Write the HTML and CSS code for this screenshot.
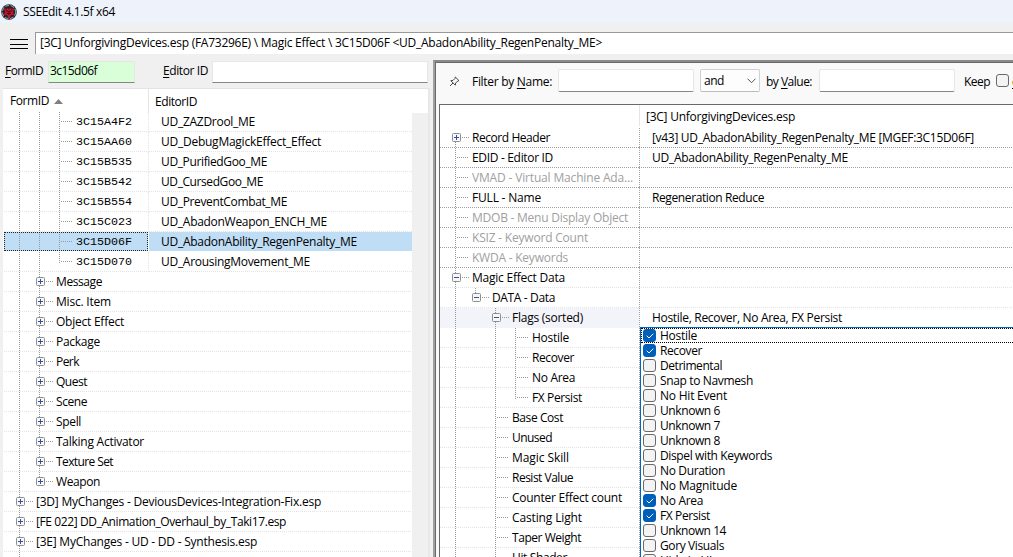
FILE: index.html
```html
<!DOCTYPE html>
<html lang="en">
<head>
<meta charset="utf-8">
<title>SSEEdit 4.1.5f x64</title>
<link rel="stylesheet" href="styles.css">
</head>
<body>
<div class="window">
  <header class="titlebar">
    <svg class="logo" width="16" height="16" viewBox="0 0 16 16">
      <circle cx="8" cy="8" r="7.8" fill="#20262a"/>
      <circle cx="8" cy="8" r="6.7" fill="none" stroke="#8b9494" stroke-width="1.2" stroke-dasharray="4 1.5"/>
      <path d="M3 4l3 2 2-3 2 3 3-2-1 4 1 3-3 0-2 4-2-4-3 0 1-3z" fill="#c8102c"/>
      <path d="M5 7h6M6 9.5h4M8 3v10" stroke="#4a0712" stroke-width="1"/>
      <path d="M6 4.5l1.5 2M10 4.5l-1.5 2M8 11v3" stroke="#f02848" stroke-width="1"/>
    </svg>
    <span data-w="92">SSEEdit 4.1.5f x64</span>
  </header>
  <div class="pathbar">
    <div class="burger"><i></i><i></i><i></i></div>
    <div class="path"><span data-w="562">[3C] UnforgivingDevices.esp (FA73296E) \ Magic Effect \ 3C15D06F &lt;UD_AbadonAbility_RegenPenalty_ME&gt;</span></div>
  </div>
  <main class="panes">
    <section class="left">
      <div class="search">
        <label class="lbl-form" data-w="38"><u>F</u>ormID</label>
        <div class="field found"><span data-w="47">3c15d06f</span></div>
        <label class="lbl-editor" data-w="45"><u>E</u>ditor ID</label>
        <div class="field wide"></div>
      </div>
      <div class="nav">
        <div class="navmain">
          <div class="navhead">
            <div class="h1"><span data-w="39">FormID</span><svg width="9" height="5" viewBox="0 0 9 5"><path d="M0 5L4.5 0L9 5z" fill="#808080"/></svg></div>
            <div class="h2"><span data-w="42">EditorID</span></div>
          </div>
          <div id="nav"></div>
        </div>
        <div class="scroll"></div>
      </div>
    </section>
    <section class="right">
      <div class="filter">
        <svg class="pin" width="11" height="11" viewBox="0 0 11 11" fill="none" stroke="#44474f" stroke-width="1"><path d="M6.3 1L10 4.7L8.7 5L6.6 7.1L6.3 9.2L1.8 4.7L4 4.4L6.1 2.3zM4 7L1 10"/></svg>
        <span class="f-name" data-w="80">Filter by <u>N</u>ame:</span>
        <div class="input i-name"></div>
        <div class="combo"><span data-w="20">and</span><svg width="9" height="6" viewBox="0 0 9 6" fill="none" stroke="#555"><path d="M.5 .7L4.5 4.7L8.5 .7"/></svg></div>
        <span class="f-value" data-w="46">by <u>V</u>alue:</span>
        <div class="input i-value"></div>
        <span class="f-keep" data-w="26">Keep</span>
        <i class="check"></i><span class="next"><u>c</u></span>
      </div>
      <div class="grid">
        <div class="gridhead"><div class="g1"></div><div class="g2"><span data-w="149">[3C] UnforgivingDevices.esp</span></div></div>
        <div id="grid"></div>
        <div class="popup" id="flags"></div>
      </div>
    </section>
  </main>
</div>
<script src="app.js"></script>
</body>
</html>
```
FILE: styles.css
```css
* { box-sizing: border-box; }
html, body { margin: 0; height: 100%; overflow: hidden; }
body { background: #f0f0f0; color: #000; font: 12px/20px "Open Sans", "Noto Sans", sans-serif; white-space: nowrap; }
i { font-style: normal; display: block; flex: none; }
u { text-underline-offset: 2px; text-decoration-thickness: 1px; }
svg { display: block; flex: none; }
.window { height: 557px; width: 1013px; overflow: hidden; display: flex; flex-direction: column; }
.titlebar { height: 23px; flex: none; background: #eef3fb; display: flex; align-items: center; gap: 6px; padding-left: 1px; }
.pathbar { height: 37px; flex: none; display: flex; padding: 9px 0 6px; }
.burger { width: 35px; padding: 7px 0 0 10px; display: grid; gap: 3px; align-content: start; }
.burger i { width: 18px; height: 1px; background: #000; margin-bottom: .5px; }
.path { flex: 1; height: 22px; background: #fff; border-top: 1px solid #999; border-left: 1px solid #999; padding-left: 4px; line-height: 19px; }
.panes { flex: 1; min-height: 0; display: flex; }

.left { width: 433px; flex: none; display: flex; flex-direction: column; }
.search { height: 28px; flex: none; display: flex; padding: 1px 0 0 5px; line-height: 20px; }
.lbl-form { width: 43px; }
.field { height: 22px; background: #fff; border: 1px solid #e6e6e6; border-bottom-color: #868686; }
.found { width: 87px; background: #d9ffd9; padding-left: 1px; line-height: 18px; }
.lbl-editor { margin-left: 28px; width: 49px; }
.wide { width: 216px; }
.nav { margin-left: 3px; width: 427px; flex: 1; min-height: 0; display: flex; background: #fff; border-top: 1px solid #e3e3e3; border-right: 2px solid #e8e8e8; }
.navmain { width: 409px; flex: none; }
.navhead { display: flex; height: 23px; line-height: 26px; }
.h1 { width: 145px; padding-left: 7px; display: flex; align-items: center; gap: 5px; }
.h1 svg { margin-top: 2px; }
.h2 { border-left: 1px solid #e5e5e5; padding-left: 6px; }
.scroll { width: 16px; margin-top: 24px; background: #f0f0f0; }

.row { display: flex; height: 20px; }
.c1 { display: flex; flex: none; height: 20px; overflow: hidden; }
.c2 { flex: 1; min-width: 0; height: 20px; }
.light .c1, .light .c2 { background: repeating-linear-gradient(90deg, #e4e4e4 0 1px, transparent 1px 2px) 0 19px / 100% 1px no-repeat; }
.dark .c1, .dark .c2 { background: repeating-linear-gradient(90deg, #a0a0a0 0 1px, transparent 1px 2px) 0 19px / 100% 1px no-repeat; }
#nav .row { padding-left: 1px; }
#nav .c1 { width: 144px; padding-left: 5px; }
#nav .wide-row .c1 { width: 408px; }
#nav .c2 { padding-left: 13px; }
#nav .split .c2 { border-left: 1px dotted #e4e4e4; padding-left: 12px; }
#nav .mono .c1 .text { font: 11.7px/20px "Liberation Mono", monospace; }
#nav .selected .c1 { background: #bfddf5; border: 1px dotted #222; height: 19px; padding-left: 4px; }
#nav .selected .c1 .g, #nav .selected .c1 .text { margin-top: -1px; }
#nav .selected .c2 { background: #bfddf5; height: 19px; margin-left: 1px; border: 0; padding-left: 12px; }

.g { width: 20px; height: 20px; position: relative; }
.v { background: repeating-linear-gradient(#999 0 1px, transparent 1px 2px) 10px 0 / 1px 100% no-repeat; }
.half { background-size: 1px 11px; }
.top { background-size: 1px 6px; }
.below { background-size: 1px 6px; background-position: 10px 14px; }
.last { width: 27px; }
.h::after { content: ""; position: absolute; left: 12px; width: 11px; top: 9px; height: 1px; background: repeating-linear-gradient(90deg, #999 0 1px, transparent 1px 2px); }
.box::after { content: ""; position: absolute; left: 17px; width: 7px; top: 9px; height: 1px; background: repeating-linear-gradient(90deg, #999 0 1px, transparent 1px 2px); }
.btn { position: absolute; left: 7px; top: 5px; }
.text { line-height: 20px; }

.right { flex: 1; min-width: 0; border-left: 2px solid #a0a0a0; border-top: 2px solid #8a8a8a; background: #f9f9f9; display: flex; flex-direction: column; box-shadow: inset 1px 1px 0 #696969; }
.filter { height: 42px; flex: none; display: flex; padding: 7px 0 0 14px; line-height: 25px; overflow: hidden; }
.filter > * { flex: none; }
.pin { margin-top: 7px; }
.f-name { width: 86px; margin-left: 12px; }
.input { height: 23px; width: 136px; background: #fff; border: 1px solid #e6e6e6; border-bottom-color: #868686; border-radius: 2px; }
.combo { width: 60px; height: 23px; margin-left: 6px; border: 1px solid #d0d0d0; border-bottom-color: #bbb; border-radius: 2px; background: #fdfdfd; display: flex; align-items: center; justify-content: space-between; padding: 0 3px; }
.f-value { width: 53px; margin-left: 6px; }
.f-keep { width: 32px; margin-left: 9px; }
.check { width: 13px; height: 13px; border: 1px solid #696969; border-radius: 3px; background: #f3f3f3; }
.filter .check { margin-top: 5px; }
.next { margin-left: 3px; }
.grid { flex: 1; min-height: 0; margin-left: 4px; border-left: 1px solid #696969; border-top: 1px solid #696969; background: #fff; position: relative; overflow: hidden; }
.gridhead { display: flex; height: 23px; line-height: 24px; }
.g1 { width: 199px; }
.g2 { border-left: 1px solid #e5e5e5; padding-left: 6px; height: 21px; }
#grid .c1 { width: 199px; padding-left: 5px; }
#grid .c2 { padding-left: 13px; position: relative; }
#grid .c2::before { content: ""; position: absolute; left: 0; top: 0; width: 1px; height: 20px; background: repeating-linear-gradient(#a0a0a0 0 1px, transparent 1px 2px); }
.muted { color: #a0a0a0; }
.active .c1 { background: #f3f4f9 !important; }
.popup { position: absolute; left: 200px; top: 222px; width: 400px; height: 240px; background: #fff; border: 1px solid #0067c0; }
.item { height: 15px; display: flex; align-items: center; gap: 4px; padding-left: 2px; line-height: 15px; }
.item.focus { outline: 1px dotted #000; outline-offset: -1px; }
.on { background: #005fb8; border-color: #005fb8; }
.on svg { margin: 3px 0 0 2px; }
```
FILE: app.js
```js
// Each row: [level, kind, label, label width, value, value width, classes]
// kind: "+" / "-" expandable node, "." leaf, "L" last leaf of its branch
const nav = [
  [2, '.', '3C15A4F2', 56, 'UD_ZAZDrool_ME', 94],
  [2, '.', '3C15AA60', 56, 'UD_DebugMagickEffect_Effect', 160],
  [2, '.', '3C15B535', 56, 'UD_PurifiedGoo_ME', 106],
  [2, '.', '3C15B542', 56, 'UD_CursedGoo_ME', 102],
  [2, '.', '3C15B554', 56, 'UD_PreventCombat_ME', 126],
  [2, '.', '3C15C023', 56, 'UD_AbadonWeapon_ENCH_ME', 166],
  [2, '.', '3C15D06F', 56, 'UD_AbadonAbility_RegenPenalty_ME', 196, 'selected'],
  [2, 'L', '3C15D070', 56, 'UD_ArousingMovement_ME', 149],
  [1, '+', 'Message', 46], [1, '+', 'Misc. Item', 55], [1, '+', 'Object Effect', 68],
  [1, '+', 'Package', 44], [1, '+', 'Perk', 23], [1, '+', 'Quest', 31], [1, '+', 'Scene', 31],
  [1, '+', 'Spell', 25], [1, '+', 'Talking Activator', 88], [1, '+', 'Texture Set', 57],
  [1, '+', 'Weapon', 44, '', 0, 'end'],
  [0, '+', '[3D] MyChanges - DeviousDevices-Integration-Fix.esp', 285],
  [0, '+', '[FE 022] DD_Animation_Overhaul_by_Taki17.esp', 250],
  [0, '+', '[3E] MyChanges - UD - DD - Synthesis.esp', 221],
  [0, '+', '', 0]
];
const record = [
  [0, '+', 'Record Header', 78, '[v43] UD_AbadonAbility_RegenPenalty_ME [MGEF:3C15D06F]', 322, 'dark first'],
  [0, '.', 'EDID - Editor ID', 81, 'UD_AbadonAbility_RegenPenalty_ME', 196, 'dark'],
  [0, '.', 'VMAD - Virtual Machine Ada...', 161, '', 0, 'dark muted'],
  [0, '.', 'FULL - Name', 69, 'Regeneration Reduce', 112, 'dark'],
  [0, '.', 'MDOB - Menu Display Object', 156, '', 0, 'dark muted'],
  [0, '.', 'KSIZ - Keyword Count', 116, '', 0, 'dark muted'],
  [0, '.', 'KWDA - Keywords', 96, '', 0, 'dark muted'],
  [0, '-', 'Magic Effect Data', 93],
  [1, '-', 'DATA - Data', 63, '', 0, 'end'],
  [2, '-', 'Flags (sorted)', 71, 'Hostile, Recover, No Area, FX Persist', 190, 'active'],
  [3, '.', 'Hostile', 37], [3, '.', 'Recover', 42], [3, '.', 'No Area', 43], [3, 'L', 'FX Persist', 50],
  [2, '.', 'Base Cost', 51], [2, '.', 'Unused', 40], [2, '.', 'Magic Skill', 57],
  [2, '.', 'Resist Value', 61], [2, '.', 'Counter Effect count', 110], [2, '.', 'Casting Light', 70],
  [2, '.', 'Taper Weight', 69], [2, '.', 'Hit Shader', 55]
];
const flags = [
  ['Hostile', 37, 1], ['Recover', 42, 1], ['Detrimental', 62], ['Snap to Navmesh', 93], ['No Hit Event', 67],
  ['Unknown 6', 60], ['Unknown 7', 60], ['Unknown 8', 60], ['Dispel with Keywords', 112], ['No Duration', 65],
  ['No Magnitude', 77], ['No Area', 43, 1], ['FX Persist', 50, 1], ['Unknown 14', 66], ['Gory Visuals', 64],
  ['Hide in UI', 52]
];

const esc = s => s.replace(/&/g, '&amp;').replace(/</g, '&lt;');
const button = k => `<svg class="btn" width="9" height="9" viewBox="0 0 9 9"><rect x=".5" y=".5" width="8" height="8" rx="1" fill="#f7f7f7" stroke="#8e8e8e"/><path d="M2 4.5h5${k === '+' ? 'M4.5 2v5' : ''}" stroke="#3550a0"/></svg>`;

function row([level, kind, label, w, value = '', vw = 0, cls = ''], isNav) {
  let cells = '';
  for (let i = 0; i < level; i++) {
    const hidden = !isNav && i === 1;
    cells += `<i class="g ${hidden ? '' : 'v'}"></i>`;
  }
  const stop = kind === 'L' ? 'half' : cls.includes('end') ? 'top' : cls.includes('first') ? 'below' : '';
  const node = '+-'.includes(kind);
  cells += `<i class="g last v ${stop} ${node ? 'box' : 'h'}">${node ? button(kind) : ''}</i>`;
  const wide = isNav && level === 0;
  const tone = cls.includes('dark') ? '' : 'light';
  const mono = isNav && level === 2 ? 'mono split' : '';
  return `<div class="row ${tone} ${mono} ${wide ? 'wide-row' : ''} ${cls}"><div class="c1">${cells}<span class="text" data-w="${w}">${esc(label)}</span></div>` +
    (wide ? '' : `<div class="c2"><span class="text" data-w="${vw}">${esc(value)}</span></div>`) + '</div>';
}

document.getElementById('nav').innerHTML = nav.map(r => row(r, true)).join('');
document.getElementById('grid').innerHTML = record.map(r => row(r, false)).join('');
document.getElementById('flags').innerHTML = flags.map(([t, w, on], i) =>
  `<div class="item ${i ? '' : 'focus'}"><i class="check ${on ? 'on' : ''}">${on ? '<svg width="8" height="6" viewBox="0 0 8 6"><path d="M.7 2.7L3 5L7.3 .7" fill="none" stroke="#fff"/></svg>' : ''}</i><span data-w="${w}">${t}</span></div>`).join('');

document.querySelectorAll('[data-w]').forEach(el => {
  const w = +el.dataset.w, n = el.textContent.length;
  if (!w || !n) return;
  const range = document.createRange();
  range.selectNodeContents(el);
  el.style.letterSpacing = (w - range.getBoundingClientRect().width) / n + 'px';
});
```
